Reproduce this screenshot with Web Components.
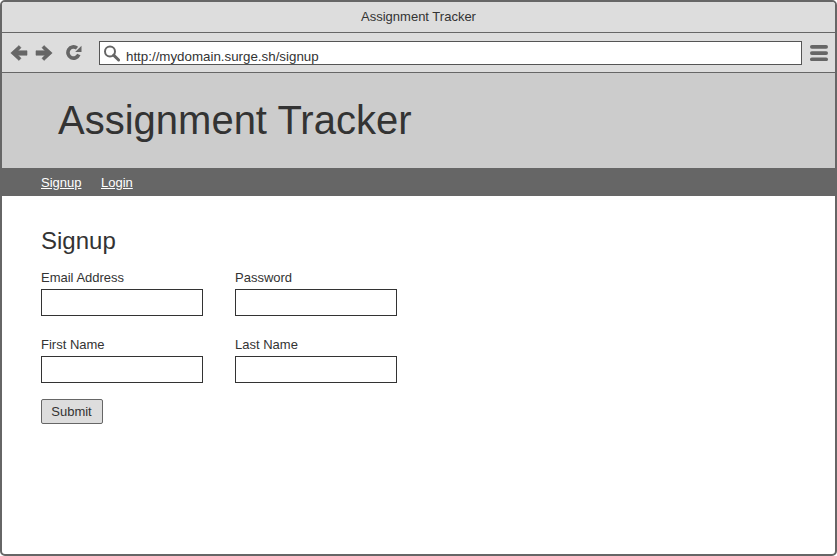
<!DOCTYPE html>
<html>
<head>
<meta charset="utf-8">
<title>Assignment Tracker</title>
<style>
  html, body { margin: 0; height: 100%; background: #fff; }
  body { font-family: "Liberation Sans", Arial, sans-serif; color: #333; overflow: hidden; }
</style>
</head>
<body>
<browser-frame title-text="Assignment Tracker" url="http://mydomain.surge.sh/signup">
  <site-header>Assignment Tracker</site-header>
  <site-nav>
    <a href="#signup">Signup</a>
    <a href="#login">Login</a>
  </site-nav>
  <signup-form></signup-form>
</browser-frame>

<script>
class BrowserFrame extends HTMLElement {
  constructor() {
    super();
    this.attachShadow({ mode: "open" });
  }

  connectedCallback() {
    this.shadowRoot.innerHTML = `
      <style>
        :host {
          display: flex;
          flex-direction: column;
          box-sizing: border-box;
          width: 837px;
          height: 556px;
          border: 2px solid #666;
          border-radius: 5px;
          overflow: hidden;
        }
        .title {
          height: 28px;
          padding-bottom: 2px;
          border-bottom: 1px solid #666;
          background: #ddd;
          display: flex;
          align-items: center;
          justify-content: center;
          font-size: 13px;
        }
        .toolbar {
          height: 39px;
          border-bottom: 1px solid #666;
          background: #ddd;
          display: flex;
          align-items: center;
        }
        .nav-icons { display: flex; align-items: center; margin-left: 8px; width: 89px; }
        .nav-icons svg { display: block; fill: #666; }
        .address {
          flex: 1;
          box-sizing: border-box;
          height: 24px;
          margin-top: 1px;
          border: 1px solid #555;
          background: #fff;
          display: flex;
          align-items: flex-end;
          font-size: 13.33px;
          line-height: 14px;
          padding: 0 0 0 26px;
          position: relative;
          white-space: nowrap;
          color: #333;
        }
        .address svg { position: absolute; left: 3px; top: 3px; }
        .menu { margin: 0 7px 0 8px; display: block; }
      </style>
      <div class="title">${this.getAttribute("title-text")}</div>
      <div class="toolbar">
        <div class="nav-icons">
          <svg width="18" height="16" viewBox="0 0 18 16" style="margin-right:7px">
            <path d="M9 .6 L0.8 8 L9 15.4 L11 13.2 L8 10.2 H17 V5.8 H8 L11 2.8 Z" stroke="#666" stroke-width="0.6" stroke-linejoin="round"/>
          </svg>
          <svg width="18" height="16" viewBox="0 0 18 16" style="margin-right:13px">
            <path d="M9 .6 L17.2 8 L9 15.4 L7 13.2 L10 10.2 H1 V5.8 H10 L7 2.8 Z" stroke="#666" stroke-width="0.6" stroke-linejoin="round"/>
          </svg>
          <svg width="17" height="17" viewBox="0 0 17 17">
            <path d="M12.8 10.5 A5.6 5.6 0 1 1 11 4.1" fill="none" stroke="#666" stroke-width="3.6"/>
            <path d="M15.5 1.8 V8 H9.2 Z"/>
          </svg>
        </div>
        <div class="address">
          <svg width="18" height="18" viewBox="0 0 18 18">
            <circle cx="7" cy="6.5" r="5" fill="none" stroke="#666" stroke-width="2"/>
            <path d="M10.6 10.2 L15.6 15" stroke="#666" stroke-width="3" stroke-linecap="round"/>
          </svg>
          <span>${this.getAttribute("url")}</span>
        </div>
        <svg class="menu" width="18" height="17" viewBox="0 0 18 17" fill="#666">
          <rect x="0" y="1" width="18" height="3.7" rx="1.85"/>
          <rect x="0" y="7.2" width="18" height="3.7" rx="1.85"/>
          <rect x="0" y="13.4" width="18" height="3.7" rx="1.85"/>
        </svg>
      </div>
      <slot></slot>
    `;
  }
}

class SiteHeader extends HTMLElement {
  constructor() {
    super();
    this.attachShadow({ mode: "open" });
    this.shadowRoot.innerHTML = `
      <style>
        :host {
          display: block;
          height: 95px;
          box-sizing: border-box;
          background: #ccc;
          padding: 24px 0 0 56px;
          font-size: 40px;
          line-height: 46px;
          color: #333;
        }
      </style>
      <slot></slot>
    `;
  }
}

class SiteNav extends HTMLElement {
  constructor() {
    super();
    this.attachShadow({ mode: "open" });
    this.shadowRoot.innerHTML = `
      <style>
        :host {
          display: flex;
          align-items: center;
          gap: 19.5px;
          height: 28px;
          background: #666;
          padding-left: 39px;
          font-size: 13px;
        }
        ::slotted(a) { color: #fff; text-decoration: underline; }
      </style>
      <slot></slot>
    `;
  }
}

class FormField extends HTMLElement {
  constructor() {
    super();
    this.attachShadow({ mode: "open" });
  }

  connectedCallback() {
    this.shadowRoot.innerHTML = `
      <style>
        :host { display: block; width: 162px; }
        label { display: block; font-size: 13px; line-height: 15px; margin-bottom: 4px; }
        input {
          display: block;
          box-sizing: border-box;
          width: 162px;
          height: 27px;
          margin: 0;
          border: 1px solid #333;
          border-radius: 0;
          background: #fff;
          outline: none;
        }
      </style>
      <label>${this.getAttribute("label")}</label>
      <input type="text">
    `;
  }
}

class SignupForm extends HTMLElement {
  constructor() {
    super();
    this.attachShadow({ mode: "open" });
    this.shadowRoot.innerHTML = `
      <style>
        :host {
          display: block;
          padding: 31px 0 0 39px;
        }
        h2 { margin: 0 0 16px; font-size: 24px; line-height: 27px; font-weight: normal; }
        .fields {
          display: grid;
          grid-template-columns: 162px 162px;
          column-gap: 32px;
          row-gap: 21px;
        }
        button {
          display: block;
          box-sizing: border-box;
          width: 62px;
          height: 25px;
          margin-top: 16px;
          padding: 0 1px 0 0;
          border: 1px solid #666;
          border-radius: 2px;
          background: #ddd;
          color: #333;
          font: 13px "Liberation Sans", Arial, sans-serif;
        }
      </style>
      <h2>Signup</h2>
      <div class="fields">
        <form-field label="Email Address"></form-field>
        <form-field label="Password"></form-field>
        <form-field label="First Name"></form-field>
        <form-field label="Last Name"></form-field>
      </div>
      <button type="button">Submit</button>
    `;
  }
}

customElements.define("browser-frame", BrowserFrame);
customElements.define("site-header", SiteHeader);
customElements.define("site-nav", SiteNav);
customElements.define("form-field", FormField);
customElements.define("signup-form", SignupForm);
</script>
</body>
</html>
